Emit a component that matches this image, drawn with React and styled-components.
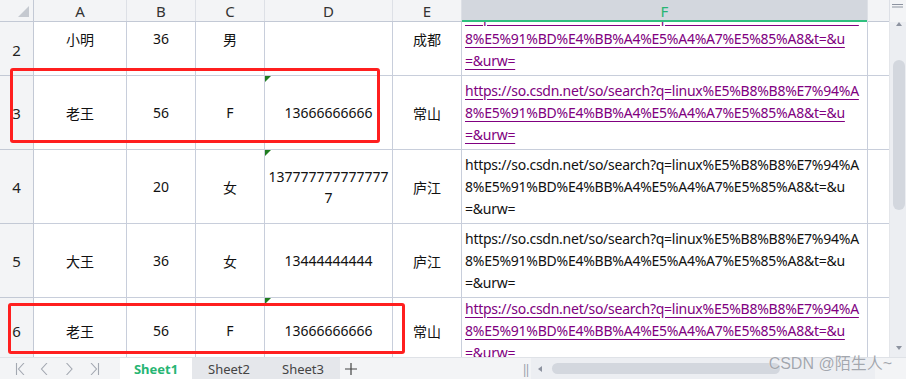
import React from "react";
import styled, { createGlobalStyle } from "styled-components";

const GlobalStyle = createGlobalStyle`
  html, body { margin: 0; padding: 0; background: #fff; }
  body { font-family: "Noto Sans", "Noto Sans CJK SC", sans-serif; }
`;

const URL1 = "https://so.csdn.net/so/search?q=linux%E5%B8%B8%E7%94%A";
const URL2 = "8%E5%91%BD%E4%BB%A4%E5%A4%A7%E5%85%A8&t=&u";
const URL3 = "=&urw=";

const rows = [
  { n: 2, a: "小明", b: "36", c: "男", d: [], e: "成都", link: true, h: 74, top: -20, numPad: 22 },
  { n: 3, a: "老王", b: "56", c: "F", d: ["13666666666"], e: "常山", link: true, h: 74, mark: true },
  { n: 4, a: "", b: "20", c: "女", d: ["137777777777777", "7"], e: "庐江", link: false, h: 74, mark: true },
  { n: 5, a: "大王", b: "36", c: "女", d: ["13444444444"], e: "庐江", link: false, h: 74 },
  { n: 6, a: "老王", b: "56", c: "F", d: ["13666666666"], e: "常山", link: true, h: 66, mark: true },
];

const cols = "34px 93px 69px 69px 128px 69px 406px 22px";

export default function App() {
  return (
    <>
      <GlobalStyle />
      <Page>
        <Main>
          <Grid>
            <HeaderRow>
              <Corner><CornerMark /></Corner>
              <ColHead>A</ColHead>
              <ColHead>B</ColHead>
              <ColHead>C</ColHead>
              <ColHead>D</ColHead>
              <ColHead>E</ColHead>
              <ColHead $active>F</ColHead>
              <ColHead />
            </HeaderRow>
            <Body>
              <Scroller>
                {rows.map((r) => (
                  <Row key={r.n} $h={r.h} $top={r.top}>
                    <RowNum $pad={r.numPad}>{r.n}</RowNum>
                    <Cell>{r.a}</Cell>
                    <Cell>{r.b}</Cell>
                    <Cell>{r.c}</Cell>
                    <Cell $stack>
                      {r.mark && <Mark />}
                      {r.d.map((t, i) => (
                        <Line key={i}>{t}</Line>
                      ))}
                    </Cell>
                    <Cell>{r.e}</Cell>
                    <UrlCell $link={r.link}>
                      <UrlLine>{URL1}</UrlLine>
                      <UrlLine>{URL2}</UrlLine>
                      <UrlLine>{URL3}</UrlLine>
                    </UrlCell>
                    <Cell />
                  </Row>
                ))}
              </Scroller>
            </Body>
          </Grid>
          <VBar>
            <VTop>
              <svg width="12" height="4" viewBox="0 0 12 4">
                <rect x="0" y="0" width="11" height="1" fill="#8d93a0" />
                <rect x="0" y="2.5" width="11" height="1" fill="#8d93a0" />
              </svg>
            </VTop>
            <VTrack>
              <svg width="6" height="4" viewBox="0 0 6 4">
                <path d="M0 4 L3 0 L6 4 Z" fill="#8d93a0" />
              </svg>
              <VThumb />
              <VSpacer />
              <svg width="6" height="4" viewBox="0 0 6 4">
                <path d="M0 0 L3 4 L6 0 Z" fill="#8d93a0" />
              </svg>
            </VTrack>
          </VBar>
        </Main>
        <TabBar>
          <Nav>
            <NavIcon><path d="M1.5 0 V12 M9 0 L3.5 6 L9 12" /></NavIcon>
            <NavIcon><path d="M7 0 L1.5 6 L7 12" /></NavIcon>
            <NavIcon><path d="M1.5 0 L7 6 L1.5 12" /></NavIcon>
            <NavIcon><path d="M1 0 L6.5 6 L1 12 M8.5 0 V12" /></NavIcon>
          </Nav>
          <Tab $active>Sheet1</Tab>
          <Tab>Sheet2</Tab>
          <Tab>Sheet3</Tab>
          <Plus>
            <svg width="12" height="12" viewBox="0 0 12 12">
              <path d="M6 0 V12 M0 6 H12" stroke="#444" strokeWidth="1.2" />
            </svg>
          </Plus>
          <Filler />
          <Splitter>‖</Splitter>
          <HTrack>
            <svg width="4" height="6" viewBox="0 0 4 6">
              <path d="M4 0 L0 3 L4 6 Z" fill="#8d93a0" />
            </svg>
            <HThumb />
          </HTrack>
          <CornerBox />
        </TabBar>
        <RedBox $x={10} $y={68} $w={370} $h={75} />
        <RedBox $x={8} $y={303} $w={397} $h={51} />
        <Watermark>CSDN @陌生人~</Watermark>
      </Page>
    </>
  );
}

const Page = styled.div`
  position: relative;
  width: 906px;
  height: 379px;
  overflow: hidden;
  background: #fff;
  font-family: "Noto Sans", "Noto Sans CJK SC", sans-serif;
  color: #111;
`;

const Main = styled.div`
  display: flex;
  height: 357px;
`;

const Grid = styled.div`
  width: 889px;
  display: flex;
  flex-direction: column;
`;

const HeaderRow = styled.div`
  position: relative;
  z-index: 1;
  display: grid;
  grid-template-columns: ${cols};
  height: 22px;
  background: #f3f4f6;
  border-bottom: 1px solid #c3c9d5;
  box-sizing: border-box;
`;

const Corner = styled.div`
  position: relative;
  border-right: 1px solid #c3c9d5;
`;

const CornerMark = styled.div`
  position: absolute;
  right: 4px;
  bottom: 4px;
  width: 0;
  height: 0;
  border-left: 11px solid transparent;
  border-bottom: 11px solid #c5c9d0;
`;

const ColHead = styled.div`
  display: flex;
  align-items: center;
  justify-content: center;
  font-size: 15px;
  color: ${(p) => (p.$active ? "#27b573" : "#333")};
  background: ${(p) => (p.$active ? "#d3d7de" : "transparent")};
  border-right: 1px solid #dde0e6;
  box-shadow: ${(p) => (p.$active ? "inset 0 -2px 0 #2fbf7e" : "none")};
  margin-bottom: ${(p) => (p.$active ? "-1px" : "0")};
`;

const Body = styled.div`
  flex: 1;
  overflow: hidden;
`;

const Scroller = styled.div`
  display: flex;
  flex-direction: column;
`;

const Row = styled.div`
  display: grid;
  grid-template-columns: ${cols};
  height: ${(p) => p.$h}px;
  margin-top: ${(p) => p.$top || 0}px;
  flex-shrink: 0;
`;

const RowNum = styled.div`
  display: flex;
  align-items: center;
  justify-content: center;
  padding-top: ${(p) => p.$pad || 0}px;
  box-sizing: border-box;
  background: #f3f4f6;
  border-right: 1px solid #c3c9d5;
  border-bottom: 1px solid #c3c9d5;
  font-size: 15px;
  color: #222;
`;

const Cell = styled.div`
  position: relative;
  display: flex;
  flex-direction: ${(p) => (p.$stack ? "column" : "row")};
  align-items: center;
  justify-content: center;
  border-right: 1px solid #c8cedb;
  border-bottom: 1px solid #c8cedb;
  font-size: 14px;
  color: #111;
  white-space: nowrap;
`;

const Line = styled.div`
  line-height: 21px;
`;

const Mark = styled.div`
  position: absolute;
  left: 0;
  top: 0;
  width: 0;
  height: 0;
  border-top: 6px solid #1f7d1f;
  border-right: 6px solid transparent;
`;

const UrlCell = styled.div`
  display: flex;
  flex-direction: column;
  justify-content: center;
  padding-left: 3px;
  border-right: 1px solid #c8cedb;
  border-bottom: 1px solid #c8cedb;
  font-size: 14px;
  color: ${(p) => (p.$link ? "#800080" : "#111")};
  text-decoration: ${(p) => (p.$link ? "underline" : "none")};
  text-underline-offset: 3px;
  overflow: hidden;
`;

const UrlLine = styled.div`
  line-height: 22px;
  white-space: nowrap;
  letter-spacing: -0.25px;
`;

const VBar = styled.div`
  width: 17px;
  display: flex;
  flex-direction: column;
  border-left: 1px solid #e4e6ea;
  box-sizing: border-box;
`;

const VTop = styled.div`
  height: 22px;
  display: flex;
  justify-content: center;
  padding-top: 4px;
  box-sizing: border-box;
  background: #f3f4f6;
`;

const VTrack = styled.div`
  flex: 1;
  display: flex;
  flex-direction: column;
  align-items: center;
  padding: 0 0 7px 1px;
  background: #eceef2;
`;

const VThumb = styled.div`
  width: 12px;
  height: 150px;
  margin-top: 34px;
  border-radius: 6px;
  background: #d3d7de;
`;

const VSpacer = styled.div`
  flex: 1;
`;

const TabBar = styled.div`
  display: flex;
  align-items: stretch;
  height: 22px;
  background: #f3f4f6;
  border-top: 1px solid #dfe2e7;
  box-sizing: border-box;
`;

const Nav = styled.div`
  display: flex;
  align-items: center;
  gap: 15px;
  width: 120px;
  padding-left: 15px;
  box-sizing: border-box;
`;

const NavIcon = styled.svg.attrs({ width: 10, height: 12, viewBox: "0 0 10 12" })`
  fill: none;
  stroke: #a3a8b1;
  stroke-width: 1.1;
`;

const Tab = styled.div`
  width: ${(p) => (p.$active ? "72px" : "74px")};
  display: flex;
  align-items: center;
  justify-content: center;
  font-size: 13px;
  font-weight: ${(p) => (p.$active ? 700 : 400)};
  color: ${(p) => (p.$active ? "#27b573" : "#444")};
  background: ${(p) => (p.$active ? "#fff" : "#e5e7eb")};
`;

const Plus = styled.div`
  width: 22px;
  display: flex;
  align-items: center;
  justify-content: center;
`;

const Filler = styled.div`
  flex: 1;
`;

const Splitter = styled.div`
  width: 10px;
  display: flex;
  align-items: center;
  justify-content: center;
  color: #9aa0aa;
  font-size: 13px;
`;

const HTrack = styled.div`
  width: 344px;
  display: flex;
  align-items: center;
  gap: 10px;
  padding-left: 7px;
  box-sizing: border-box;
  background: #eceef2;
`;

const HThumb = styled.div`
  width: 228px;
  height: 11px;
  border-radius: 6px;
  background: #d3d7de;
`;

const CornerBox = styled.div`
  width: 31px;
`;

const RedBox = styled.div`
  position: absolute;
  left: ${(p) => p.$x}px;
  top: ${(p) => p.$y}px;
  width: ${(p) => p.$w}px;
  height: ${(p) => p.$h}px;
  border: 3px solid #ff1f1f;
  border-radius: 3px;
  box-sizing: border-box;
  pointer-events: none;
`;

const Watermark = styled.div`
  position: absolute;
  right: 14px;
  bottom: 5px;
  font-family: "Liberation Sans", "Noto Sans CJK SC", sans-serif;
  font-size: 16px;
  color: #a3a7ae;
  text-shadow: 0 0 1px #fff;
  pointer-events: none;
`;
